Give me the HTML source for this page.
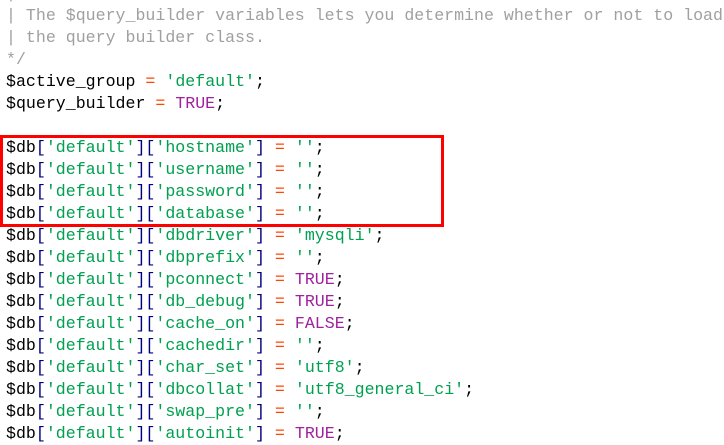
<!DOCTYPE html>
<html><head><meta charset="utf-8"><style>
body{margin:0;width:724px;height:428px;overflow:hidden;background:#fff;position:relative}
pre{margin:0;position:absolute;left:6px;top:-17px;font-family:"Liberation Mono",monospace;font-size:16.6px;line-height:22px;color:#000;white-space:pre}
.c{color:#a0a0a0}.s{color:#00a050}.o{color:#ff4500}.k{color:#a020a0}.b{color:#000080}.v{color:#000}
.box{position:absolute;left:0;top:135px;width:438px;height:86px;border:3px solid #ff0000;box-sizing:content-box}
</style></head><body>
<pre><span class="c">|
| The $query_builder variables lets you determine whether or not to load
| the query builder class.
*/</span>
$active_group <span class="o">=</span> <span class="s">'default'</span>;
$query_builder <span class="o">=</span> <span class="k">TRUE</span>;

$db<span class="b">[</span><span class="s">'default'</span><span class="b">][</span><span class="s">'hostname'</span><span class="b">]</span> <span class="o">=</span> <span class="s">''</span>;
$db<span class="b">[</span><span class="s">'default'</span><span class="b">][</span><span class="s">'username'</span><span class="b">]</span> <span class="o">=</span> <span class="s">''</span>;
$db<span class="b">[</span><span class="s">'default'</span><span class="b">][</span><span class="s">'password'</span><span class="b">]</span> <span class="o">=</span> <span class="s">''</span>;
$db<span class="b">[</span><span class="s">'default'</span><span class="b">][</span><span class="s">'database'</span><span class="b">]</span> <span class="o">=</span> <span class="s">''</span>;
$db<span class="b">[</span><span class="s">'default'</span><span class="b">][</span><span class="s">'dbdriver'</span><span class="b">]</span> <span class="o">=</span> <span class="s">'mysqli'</span>;
$db<span class="b">[</span><span class="s">'default'</span><span class="b">][</span><span class="s">'dbprefix'</span><span class="b">]</span> <span class="o">=</span> <span class="s">''</span>;
$db<span class="b">[</span><span class="s">'default'</span><span class="b">][</span><span class="s">'pconnect'</span><span class="b">]</span> <span class="o">=</span> <span class="k">TRUE</span>;
$db<span class="b">[</span><span class="s">'default'</span><span class="b">][</span><span class="s">'db_debug'</span><span class="b">]</span> <span class="o">=</span> <span class="k">TRUE</span>;
$db<span class="b">[</span><span class="s">'default'</span><span class="b">][</span><span class="s">'cache_on'</span><span class="b">]</span> <span class="o">=</span> <span class="k">FALSE</span>;
$db<span class="b">[</span><span class="s">'default'</span><span class="b">][</span><span class="s">'cachedir'</span><span class="b">]</span> <span class="o">=</span> <span class="s">''</span>;
$db<span class="b">[</span><span class="s">'default'</span><span class="b">][</span><span class="s">'char_set'</span><span class="b">]</span> <span class="o">=</span> <span class="s">'utf8'</span>;
$db<span class="b">[</span><span class="s">'default'</span><span class="b">][</span><span class="s">'dbcollat'</span><span class="b">]</span> <span class="o">=</span> <span class="s">'utf8_general_ci'</span>;
$db<span class="b">[</span><span class="s">'default'</span><span class="b">][</span><span class="s">'swap_pre'</span><span class="b">]</span> <span class="o">=</span> <span class="s">''</span>;
$db<span class="b">[</span><span class="s">'default'</span><span class="b">][</span><span class="s">'autoinit'</span><span class="b">]</span> <span class="o">=</span> <span class="k">TRUE</span>;</pre>
<div class="box"></div>
</body></html>
